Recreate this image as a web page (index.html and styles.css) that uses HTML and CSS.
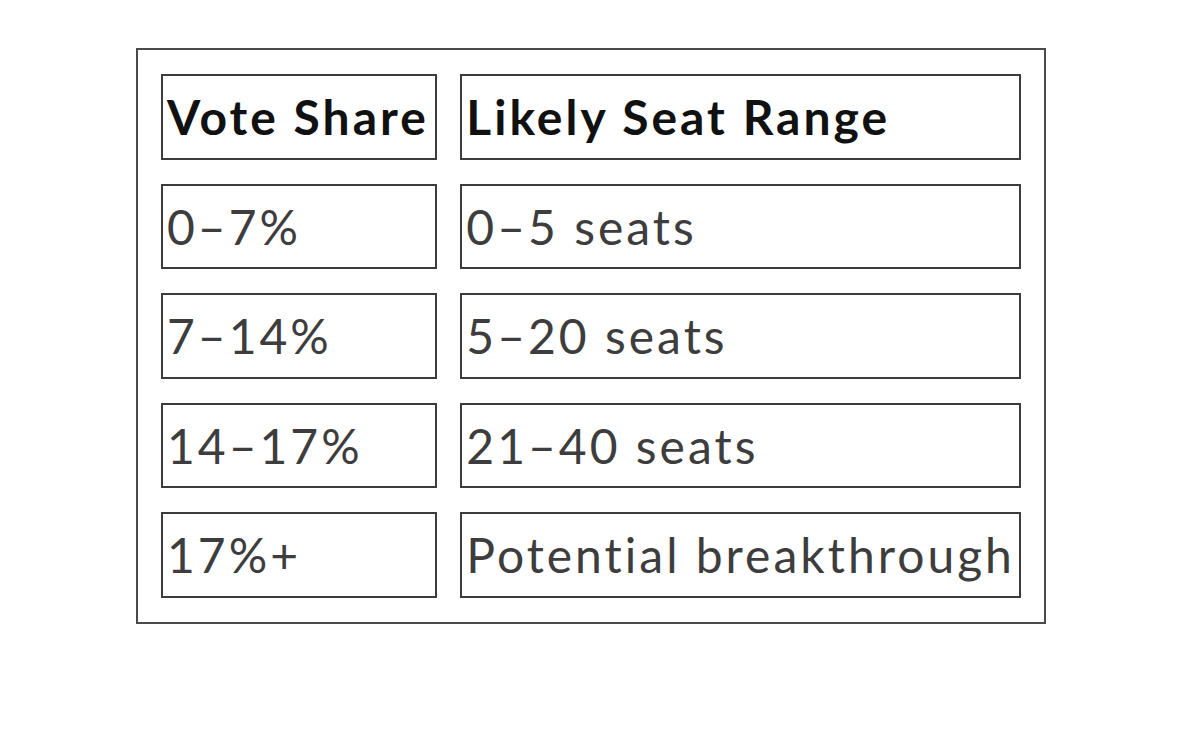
FILE: index.html
```html
<!DOCTYPE html>
<html>
<head>
<meta charset="utf-8">
<link rel="stylesheet" href="styles.css">
</head>
<body>
<div class="page">
  <table class="seats">
    <colgroup><col class="c1"><col class="c2"></colgroup>
    <tr><th>Vote Share</th><th>Likely Seat Range</th></tr>
    <tr><td>0–7%</td><td>0–5 seats</td></tr>
    <tr><td>7–14%</td><td>5–20 seats</td></tr>
    <tr><td>14–17%</td><td>21–40 seats</td></tr>
    <tr><td>17%+</td><td>Potential breakthrough</td></tr>
  </table>
</div>
</body>
</html>
```

FILE: styles.css
```css
html, body {
  margin: 0;
  padding: 0;
  background: #ffffff;
}
.page {
  padding: 48px 0 0 136px;
}
.seats {
  border: 2px solid #4a4a4a;
  border-collapse: separate;
  border-spacing: 23.5px 24px;
  table-layout: fixed;
  width: 910px;
  font-family: Lato, "Open Sans", sans-serif;
}
.c1 { width: 276px; }
.c2 { width: 560px; }
.seats tr { height: 85.5px; }
.seats th,
.seats td {
  border: 2px solid #3c3c3c;
  padding: 0 0 0 4px;
  text-align: left;
  vertical-align: middle;
  font-size: 48px;
  letter-spacing: 3px;
  white-space: nowrap;
  overflow: hidden;
}
.seats th {
  font-weight: 700;
  color: #111111;
}
.seats td {
  font-weight: 400;
  color: #3d3d3d;
}
```
